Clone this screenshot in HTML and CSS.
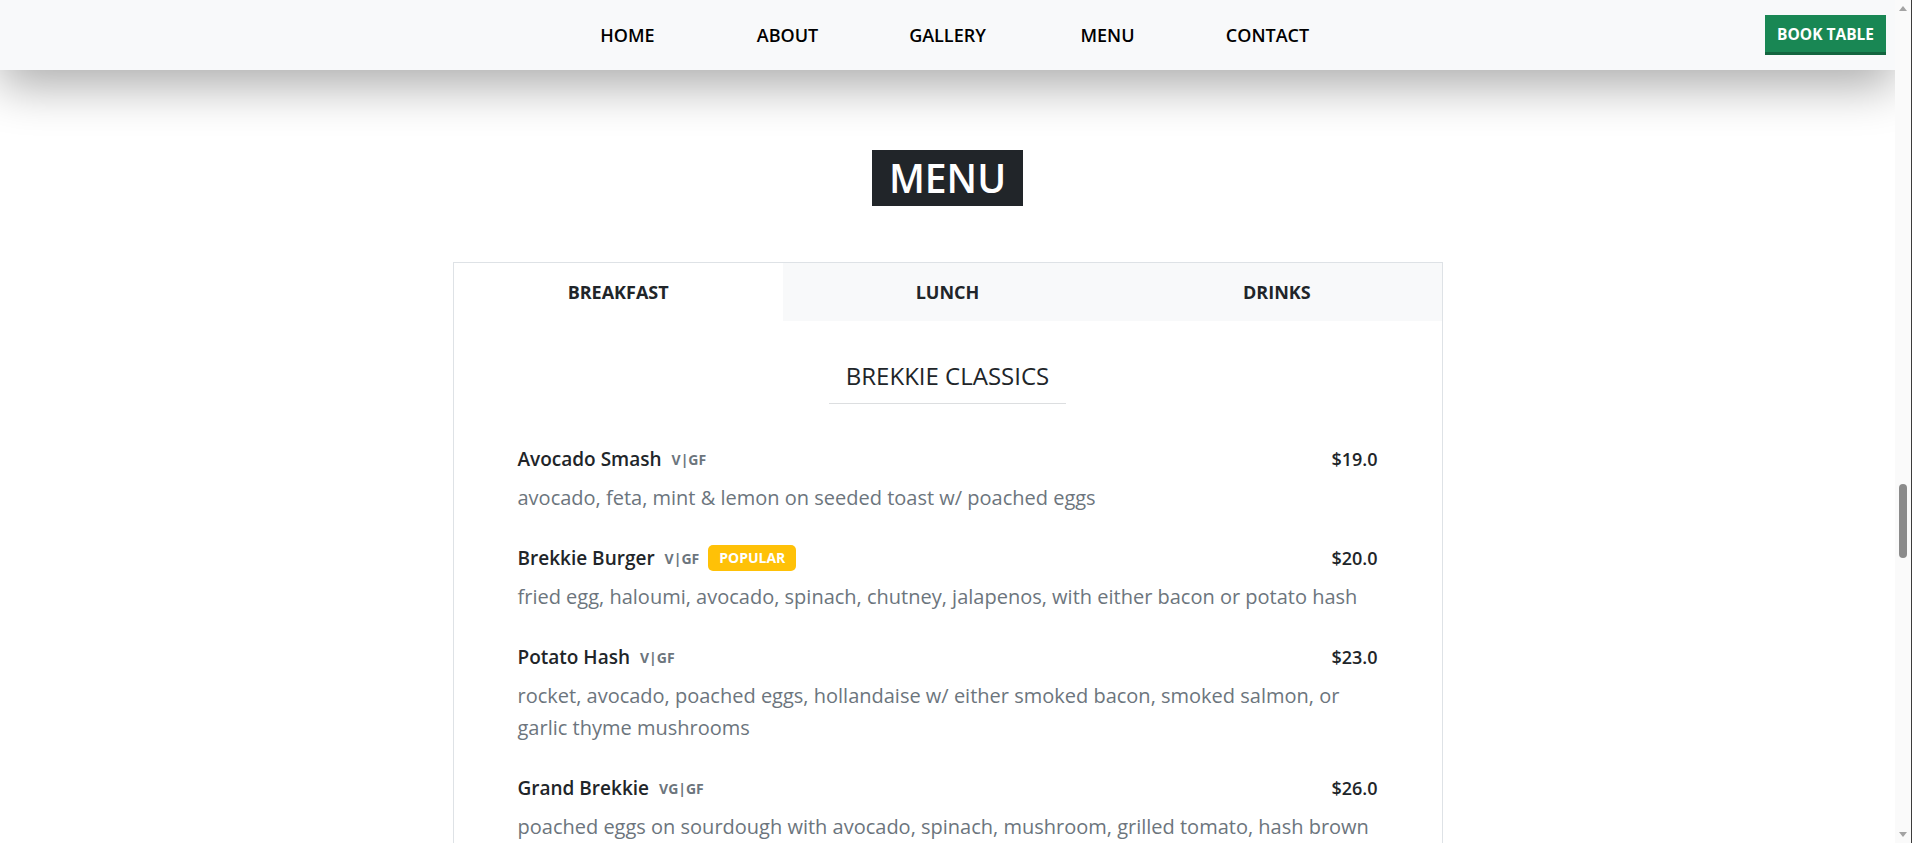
FILE: index.html
```html
<!DOCTYPE html>
<html lang="en">
<head>
<meta charset="utf-8">
<title>Menu</title>
<link rel="stylesheet" href="styles.css">
</head>
<body>
<div class="window">
  <div class="page">
    <header class="navbar">
      <div class="nav-spacer"></div>
      <nav class="nav-links">
        <a href="#">HOME</a>
        <a href="#">ABOUT</a>
        <a href="#">GALLERY</a>
        <a href="#">MENU</a>
        <a href="#">CONTACT</a>
      </nav>
      <div class="nav-actions"><a class="btn-book" href="#">BOOK TABLE</a></div>
    </header>
    <main class="content">
      <h2 class="page-title"><span>MENU</span></h2>
      <section class="menu-card">
        <div class="tabs">
          <button class="tab active">BREAKFAST</button>
          <button class="tab">LUNCH</button>
          <button class="tab">DRINKS</button>
        </div>
        <div class="card-body">
          <h3 class="section-title"><span>BREKKIE CLASSICS</span></h3>
          <ul class="items">
            <li class="item">
              <div class="item-head"><span class="item-name">Avocado Smash</span><span class="tags">V|GF</span><span class="price">$19.0</span></div>
              <p class="desc">avocado, feta, mint &amp; lemon on seeded toast w/ poached eggs</p>
            </li>
            <li class="item">
              <div class="item-head"><span class="item-name">Brekkie Burger</span><span class="tags">V|GF</span><span class="badge">POPULAR</span><span class="price">$20.0</span></div>
              <p class="desc">fried egg, haloumi, avocado, spinach, chutney, jalapenos, with either bacon or potato hash</p>
            </li>
            <li class="item">
              <div class="item-head"><span class="item-name">Potato Hash</span><span class="tags">V|GF</span><span class="price">$23.0</span></div>
              <p class="desc">rocket, avocado, poached eggs, hollandaise w/ either smoked bacon, smoked salmon, or garlic thyme mushrooms</p>
            </li>
            <li class="item">
              <div class="item-head"><span class="item-name">Grand Brekkie</span><span class="tags">VG|GF</span><span class="price">$26.0</span></div>
              <p class="desc">poached eggs on sourdough with avocado, spinach, mushroom, grilled tomato, hash brown</p>
            </li>
            <li class="item">
              <div class="item-head"><span class="item-name">Eggs Benedict</span><span class="tags">GF</span><span class="price">$22.0</span></div>
              <p class="desc">poached eggs, hollandaise, spinach on sourdough w/ bacon or smoked salmon</p>
            </li>
          </ul>
        </div>
      </section>
    </main>
  </div>
  <div class="scrollbar">
    <span class="arrow-up"></span>
    <span class="thumb"></span>
    <span class="arrow-down"></span>
  </div>
</div>
</body>
</html>
```

FILE: styles.css
```css
html, body {
  margin: 0;
  height: 100%;
  overflow: hidden;
}
body {
  font-family: "Open Sans", "Noto Sans", sans-serif;
  color: #212529;
  background: #fff;
}
.window {
  display: flex;
  height: 100vh;
}
.page {
  flex: 1;
  min-width: 0;
  overflow: hidden;
}

/* navbar */
.navbar {
  height: 70px;
  background: #f8f9fa;
  display: grid;
  grid-template-columns: 1fr auto 1fr;
  align-items: center;
  position: relative;
  z-index: 2;
  box-shadow: 0 16px 48px rgba(0, 0, 0, 0.33);
}
.nav-links {
  display: grid;
  grid-template-columns: repeat(5, 160px);
}
.nav-links a {
  text-align: center;
  font-size: 18px;
  font-weight: 600;
  color: #000;
  text-decoration: none;
  line-height: 26px;
}
.nav-actions {
  justify-self: end;
  padding-right: 9px;
}
.btn-book {
  display: block;
  background: #198754;
  color: #fff;
  font-size: 15.5px;
  font-weight: 700;
  line-height: 23px;
  padding: 8px 12px 6px;
  border-bottom: 3px solid #13653f;
  text-decoration: none;
}

/* content */
.content {
  padding-top: 80px;
}
.page-title {
  margin: 0 0 56px;
  text-align: center;
}
.page-title span {
  display: inline-block;
  background: #212529;
  color: #fff;
  font-size: 39px;
  font-weight: 600;
  line-height: 48px;
  padding: 4px 17px;
}
.menu-card {
  width: 988px;
  margin: 0 auto;
  border: 1px solid #dee2e6;
}
.tabs {
  display: grid;
  grid-template-columns: repeat(3, 1fr);
}
.tab {
  height: 58px;
  border: 0;
  background: #f8f9fa;
  font-family: inherit;
  font-size: 18px;
  font-weight: 700;
  color: #212529;
  padding: 0;
}
.tab.active {
  background: #fff;
}
.card-body {
  padding: 40px 64px;
}
.section-title {
  margin: 0 0 40px;
  text-align: center;
}
.section-title span {
  display: inline-block;
  font-size: 24px;
  font-weight: 500;
  line-height: 29px;
  padding: 0 17px 13px;
  border-bottom: 1px solid #dcdee0;
}
.items {
  list-style: none;
  margin: 0;
  padding: 0;
}
.item {
  margin-bottom: 29px;
}
.item-head {
  display: flex;
  align-items: center;
  height: 30px;
}
.item-name {
  font-size: 19px;
  font-weight: 600;
}
.tags {
  margin-left: 10px;
  font-size: 14px;
  font-weight: 700;
  color: #6c757d;
}
.badge {
  margin-left: 9px;
  background: #ffc107;
  color: #fff;
  font-size: 14px;
  font-weight: 700;
  line-height: 20px;
  padding: 3px 11px;
  border-radius: 5px;
}
.price {
  margin-left: auto;
  font-size: 18px;
  font-weight: 600;
}
.desc {
  margin: 8px 0 0;
  font-size: 20px;
  line-height: 32px;
  color: #6c757d;
}

/* fake window scrollbar */
.scrollbar {
  width: 16px;
  background: #fafafa;
  border-right: 1px solid #3c3c3c;
  display: flex;
  flex-direction: column;
  align-items: center;
}
.arrow-up {
  margin-top: 6px;
  border-left: 4px solid transparent;
  border-right: 4px solid transparent;
  border-bottom: 5px solid #a3a3a3;
}
.thumb {
  margin-top: 473px;
  width: 8px;
  height: 74px;
  border-radius: 4px;
  background: #8b8b8b;
}
.arrow-down {
  margin-top: auto;
  margin-bottom: 6px;
  border-left: 4px solid transparent;
  border-right: 4px solid transparent;
  border-top: 5px solid #a3a3a3;
}
```
